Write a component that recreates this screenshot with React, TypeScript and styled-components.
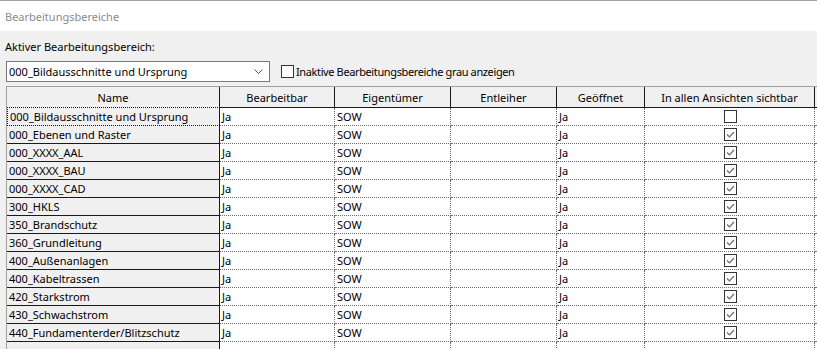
import React from "react";
import styled, { createGlobalStyle } from "styled-components";

const Global = createGlobalStyle`
  html, body { margin: 0; padding: 0; background: #f0f0f0; overflow: hidden; }
  body { font-family: "Segoe UI", "Noto Sans", "DejaVu Sans", sans-serif; font-size: 11px; color: #000; }
`;

const Window = styled.div`
  width: 817px;
  height: 349px;
  border-top: 1px solid #a3a3a3;
  box-sizing: border-box;
  overflow: hidden;
`;

const TitleBar = styled.div`
  height: 30px;
  background: #fff;
  display: flex;
  align-items: center;
  padding-left: 5px;
  color: #8c8c8c;
  font-size: 11px;
`;

const Body = styled.div`
  padding: 8px 0 0 6px;
`;

const Label = styled.div`
  height: 16px;
  line-height: 16px;
  margin-left: -1px;
`;

const Controls = styled.div`
  display: flex;
  align-items: center;
  margin-top: 6px;
  height: 21px;
`;

const Select = styled.div`
  width: 264px;
  height: 21px;
  box-sizing: border-box;
  background: #fff;
  border: 1px solid #7a7a7a;
  display: flex;
  align-items: center;
  justify-content: space-between;
  padding: 0 6px 0 2px;
`;

const Chevron = () => (
  <svg width="9" height="6" viewBox="0 0 9 6">
    <path d="M0.5 0.5 L4.5 4.5 L8.5 0.5" fill="none" stroke="#555" strokeWidth="1" />
  </svg>
);

const InlineCheck = styled.label`
  display: flex;
  align-items: center;
  margin-left: 11px;
  gap: 2px;
`;

const InlineText = styled.span`
  letter-spacing: -0.38px;
`;

const Box = styled.span`
  width: 13px;
  height: 13px;
  box-sizing: border-box;
  border: 1px solid #333;
  background: #fff;
  display: inline-flex;
  align-items: center;
  justify-content: center;
`;

const Tick = () => (
  <svg width="11" height="11" viewBox="0 0 11 11">
    <path d="M2 5.5 L4.5 8 L9 3" fill="none" stroke="#6a6a6a" strokeWidth="1.2" />
  </svg>
);

const Grid = styled.div`
  margin-top: 4px;
  display: grid;
  grid-template-columns: 213px 115px 116px 106px 88px 170px 40px;
  border-top: 1px solid #a0a0a0;
  border-left: 1px solid #a0a0a0;
  width: max-content;
`;

const Head = styled.div`
  height: 21px;
  box-sizing: border-box;
  background: #f0f0f0;
  border-right: 1px solid #1a1a1a;
  border-bottom: 1px solid #1a1a1a;
  display: flex;
  align-items: center;
  justify-content: center;
`;

const NameCell = styled.div<{ $focus?: boolean }>`
  height: 18px;
  box-sizing: border-box;
  background: #f0f0f0;
  border-bottom: 1px ${(p) => (p.$focus ? "dotted" : "solid")} #1a1a1a;
  border-top: ${(p) => (p.$focus ? "1px dotted #1a1a1a" : "none")};
  border-right: 1px solid #1a1a1a;
  padding-left: 2px;
  display: flex;
  align-items: center;
  white-space: nowrap;
  ${(p) => (p.$focus ? "margin-top:-1px; height:19px; border-left:1px dotted #1a1a1a;" : "")}
`;

const Cell = styled.div<{ $center?: boolean }>`
  height: 18px;
  box-sizing: border-box;
  background: #fff;
  border-bottom: 1px dotted #6e6e6e;
  border-right: 1px dotted #6e6e6e;
  padding-left: 2px;
  display: flex;
  align-items: center;
  justify-content: ${(p) => (p.$center ? "center" : "flex-start")};
  white-space: nowrap;
`;

const rows = [
  "000_Bildausschnitte und Ursprung",
  "000_Ebenen und Raster",
  "000_XXXX_AAL",
  "000_XXXX_BAU",
  "000_XXXX_CAD",
  "300_HKLS",
  "350_Brandschutz",
  "360_Grundleitung",
  "400_Außenanlagen",
  "400_Kabeltrassen",
  "420_Starkstrom",
  "430_Schwachstrom",
  "440_Fundamenterder/Blitzschutz",
];

export default function App() {
  const heads = ["Name", "Bearbeitbar", "Eigentümer", "Entleiher", "Geöffnet", "In allen Ansichten sichtbar", ""];
  return (
    <>
      <Global />
      <Window>
        <TitleBar>Bearbeitungsbereiche</TitleBar>
        <Body>
          <Label>Aktiver Bearbeitungsbereich:</Label>
          <Controls>
            <Select>
              <span>000_Bildausschnitte und Ursprung</span>
              <Chevron />
            </Select>
            <InlineCheck>
              <Box />
              <InlineText>Inaktive Bearbeitungsbereiche grau anzeigen</InlineText>
            </InlineCheck>
          </Controls>
          <Grid>
            {heads.map((h, i) => (
              <Head key={i}>{h}</Head>
            ))}
            {rows.map((r, i) => (
              <React.Fragment key={r}>
                <NameCell $focus={i === 0}>{r}</NameCell>
                <Cell>Ja</Cell>
                <Cell>SOW</Cell>
                <Cell />
                <Cell>Ja</Cell>
                <Cell $center>
                  <Box>{i === 0 ? null : <Tick />}</Box>
                </Cell>
                <Cell />
              </React.Fragment>
            ))}
            <NameCell />
            <Cell />
            <Cell />
            <Cell />
            <Cell />
            <Cell />
            <Cell />
          </Grid>
        </Body>
      </Window>
    </>
  );
}
